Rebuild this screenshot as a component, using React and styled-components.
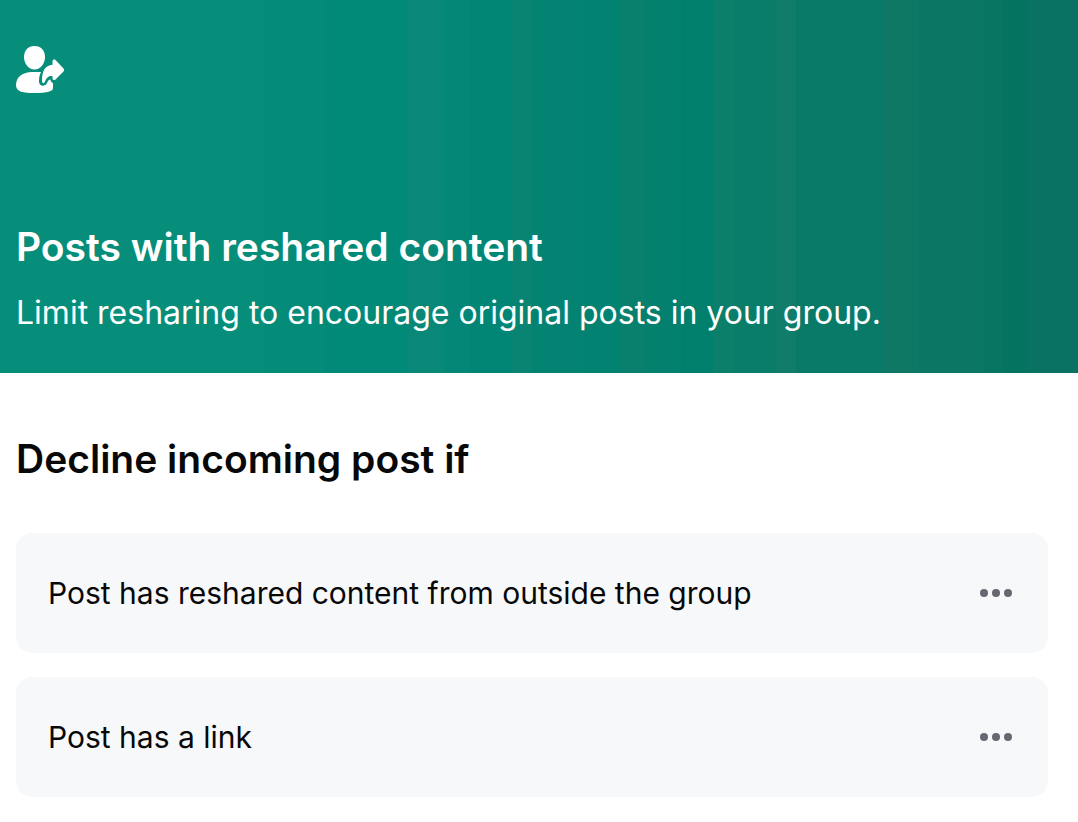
import React from 'react';
import styled, { createGlobalStyle } from 'styled-components';

const GlobalStyle = createGlobalStyle`
  * {
    box-sizing: border-box;
  }

  body {
    margin: 0;
    background-color: #ffffff;
    color: #080809;
    font-family: Inter, 'Liberation Sans', sans-serif;
  }
`;

const Banner = styled.header`
  padding: 44px 16px 36px;
  color: #ffffff;
  background-image: linear-gradient(
    to right,
    #068e7a 0 264px,
    #048c79 264px 324px,
    #018a77 324px 408px,
    #098878 408px 444px,
    #048776 444px 470px,
    #018575 470px 512px,
    #098473 512px 532px,
    #058372 532px 584px,
    #028270 584px 620px,
    #09806d 620px 645px,
    #03806e 645px 681px,
    #007f6d 681px 713px,
    #0c7f6b 713px 734px,
    #0a7d6a 734px 776px,
    #127c6a 776px 796px,
    #0a7a68 796px 884px,
    #0f7865 884px 919px,
    #0c7664 919px 984px,
    #087562 984px 1003px,
    #047360 1003px 1028px,
    #0a7262 1028px
  );
`;

const BannerIcon = styled.svg`
  display: block;
  width: 50px;
  height: 50px;
  margin-bottom: 127px;
`;

const BannerTitle = styled.h1`
  margin: 0;
  font-size: 39px;
  font-weight: 600;
  line-height: 52px;
`;

const BannerText = styled.p`
  margin: 16px 0 0;
  font-size: 32px;
  line-height: 48px;
`;

const Content = styled.main`
  padding: 60px 30px 24px 16px;
`;

const SectionTitle = styled.h2`
  margin: 0 0 48px;
  font-size: 39px;
  font-weight: 600;
  line-height: 52px;
`;

const CriteriaList = styled.ul`
  display: flex;
  flex-direction: column;
  gap: 24px;
  margin: 0;
  padding: 0;
  list-style: none;
`;

const CriteriaRow = styled.li`
  display: flex;
  align-items: center;
  justify-content: space-between;
  min-height: 120px;
  padding: 16px 32px;
  border-radius: 16px;
  background-color: #f7f8fa;
  font-size: 30px;
  font-weight: 400;
  line-height: 40px;
`;

const MoreButton = styled.button`
  display: flex;
  padding: 0;
  border: none;
  background: none;
  color: #656871;
  cursor: pointer;
`;

const criteria = ['Post has reshared content from outside the group', 'Post has a link'];

const App = () => {
  return (
    <>
      <GlobalStyle />
      <Banner>
        <BannerIcon viewBox="0 0 50 50" fill="currentColor" aria-hidden="true">
          <path d="M18.5 2C25 2 29 6.500 29 13S24.500 25.500 18.500 25.500 8 19.500 8 13 12 2 18.500 2Z" />
          <path d="M0 41C0 33 7 28 16 28H25C23.500 31 23 34 23 37.500C23 42.500 29 43 31 39C32 36.500 33 35.500 34.500 35.500C34.500 37.500 35.500 38.500 37 39V44C37 47.500 31 49 19 49S0 48 0 41Z" />
          <path d="M36.500 17.500C36.500 15.500 38.500 15 39.500 16L47.500 24.500C48.300 25.400 48.300 26.600 47.500 27.500L39.500 35.500C38.500 36.500 36.500 36 36.500 34.500V32C32.500 31.500 30.500 33.500 29 37.500C28 40 26 39.500 26 37C26 27 29 21.500 36.500 20.800Z" />
        </BannerIcon>
        <BannerTitle>Posts with reshared content</BannerTitle>
        <BannerText>Limit resharing to encourage original posts in your group.</BannerText>
      </Banner>
      <Content>
        <SectionTitle>Decline incoming post if</SectionTitle>
        <CriteriaList>
          {criteria.map((label) => (
            <CriteriaRow key={label}>
              <span>{label}</span>
              <MoreButton type="button" aria-label={`More options: ${label}`}>
                <svg width="40" height="12" viewBox="0 0 40 12" fill="currentColor" aria-hidden="true">
                  <circle cx="8" cy="6" r="4" />
                  <circle cx="20" cy="6" r="4" />
                  <circle cx="32" cy="6" r="4" />
                </svg>
              </MoreButton>
            </CriteriaRow>
          ))}
        </CriteriaList>
      </Content>
    </>
  );
};

export default App;
